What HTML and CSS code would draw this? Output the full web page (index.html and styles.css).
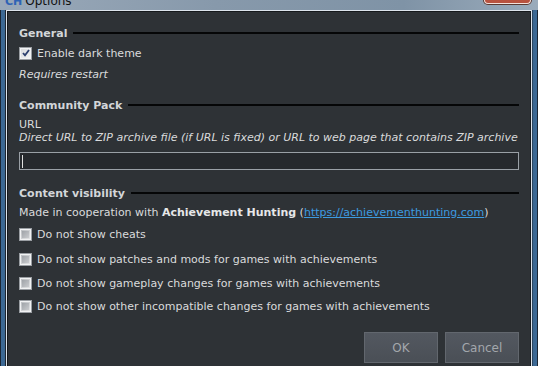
FILE: index.html
```html
<!DOCTYPE html>
<html>
<head>
<meta charset="utf-8">
<link rel="stylesheet" href="styles.css">
</head>
<body>
<div class="window">
  <div class="titlebar">
    <span class="app-icon">CH</span>
    <span class="title">Options</span>
    <span class="close"></span>
  </div>
  <div class="frame">
    <div class="client-edge">
      <div class="client">
        <div class="section-head"><span>General</span><span class="rule"></span></div>
        <label class="check-row first"><span class="box checked"><svg viewBox="0 0 8 8" width="8" height="8"><path d="M1 4 L3 6.3 L7 1" fill="none" stroke="#2b3f6e" stroke-width="1.8"/></svg></span>Enable dark theme</label>
        <div class="note">Requires restart</div>

        <div class="section-head gap-lg"><span>Community Pack</span><span class="rule"></span></div>
        <div class="label url">URL</div>
        <div class="note tight">Direct URL to ZIP archive file (if URL is fixed) or URL to web page that contains ZIP archive</div>
        <div class="input"><span class="caret"></span></div>

        <div class="section-head gap-lg2"><span>Content visibility</span><span class="rule"></span></div>
        <div class="label coop">Made in cooperation with <b>Achievement Hunting</b> (<a class="link">https://achievementhunting.com</a>)</div>
        <label class="check-row r1"><span class="box"></span>Do not show cheats</label>
        <label class="check-row r2"><span class="box"></span>Do not show patches and mods for games with achievements</label>
        <label class="check-row r3"><span class="box"></span>Do not show gameplay changes for games with achievements</label>
        <label class="check-row r4"><span class="box"></span>Do not show other incompatible changes for games with achievements</label>

        <div class="buttons">
          <span class="btn">OK</span>
          <span class="btn">Cancel</span>
        </div>
      </div>
    </div>
  </div>
</div>
</body>
</html>
```
FILE: styles.css
```css
html, body {
  margin: 0;
  padding: 0;
  width: 538px;
  height: 366px;
  overflow: hidden;
  background: #2b2f33;
}
.window {
  width: 538px;
  height: 366px;
  display: flex;
  flex-direction: column;
  font-family: "DejaVu Sans", Verdana, sans-serif;
  font-size: 11px;
  color: #dadbdc;
}
.titlebar {
  height: 10px;
  flex: none;
  display: flex;
  align-items: flex-end;
  overflow: hidden;
  background: linear-gradient(90deg, #9aa9b9 0%, #8799ab 40%, #7f93a6 75%, #9aabbb 100%);
}
.app-icon {
  margin-left: 5px;
  font-weight: bold;
  font-size: 11px;
  line-height: 11px;
  color: #2f63b5;
  margin-bottom: 3px;
}
.title {
  margin-left: 3px;
  font-size: 12px;
  line-height: 12px;
  color: #111;
  margin-bottom: 3px;
}
.close {
  margin-left: auto;
  margin-right: 7px;
  align-self: flex-start;
  width: 45px;
  height: 3px;
  background: #b8523f;
  border: 1px solid #f2e2dc;
  border-top: none;
  border-radius: 0 0 4px 4px;
  box-shadow: 0 0 0 1px #5b3a33;
}
.frame {
  flex: 1;
  display: flex;
  background: linear-gradient(90deg, #1b2633 0, #1b2633 1px, #3d6a97 1px, #3a6690 5px, #1c2530 5px, #1c2530 6px, transparent 6px, transparent 532px, #1c2530 532px, #3a6690 533px, #3d6a97 537px, #1b2633 537px);
}
.client-edge {
  flex: 1;
  margin: 0 6px;
  border: 1px solid #dde4ec;
  border-bottom: none;
  display: flex;
}
.client {
  flex: 1;
  border: 1px solid #16191c;
  border-bottom: none;
  background: #2e3236;
  padding: 13px 11px 0 11px;
  display: flex;
  flex-direction: column;
}
.section-head {
  display: flex;
  align-items: center;
  height: 16px;
  font-weight: bold;
  color: #d3d6d9;
  gap: 6px;
}
.rule {
  flex: 1;
  height: 2px;
  background: #050607;
}
.gap-lg { margin-top: 14px; }
.gap-lg2 { margin-top: 15px; }
.check-row {
  display: flex;
  align-items: center;
  height: 16px;
  gap: 5px;
  white-space: nowrap;
}
.check-row.first { margin-top: 4px; }
.check-row.r1 { margin-top: 5px; }
.check-row.r2 { margin-top: 9px; }
.check-row.r3 { margin-top: 8px; }
.check-row.r4 { margin-top: 7px; }
.box {
  width: 11px;
  height: 11px;
  flex: none;
  border: 1px solid #9a9ea3;
  background: linear-gradient(135deg, #b8bbbf, #e6e7e8);
  box-shadow: inset 0 0 0 1px #f1f2f3;
  display: flex;
  align-items: center;
  justify-content: center;
}
.box:not(.checked)::after {
  content: "";
  width: 7px;
  height: 7px;
  background: linear-gradient(135deg, #9fa3a8, #c9cbce);
}
.box.checked {
  background: linear-gradient(135deg, #d6d8db, #f3f4f5);
}
.note {
  font-style: italic;
  height: 16px;
  line-height: 16px;
  margin-top: 6px;
  white-space: nowrap;
}
.note.tight { margin-top: 0; height: 14px; line-height: 14px; }
.label {
  height: 16px;
  line-height: 16px;
  white-space: nowrap;
}
.label.url { margin-top: 5px; height: 13px; line-height: 13px; }
.coop { margin-top: 4px; }
.coop b { color: #e6e7e8; }
.link {
  color: #3d9be0;
  text-decoration: underline;
}
.input {
  margin-top: 7px;
  height: 16px;
  border: 1px solid #9aa0a6;
  background: #26292d;
  display: flex;
  align-items: center;
}
.caret {
  width: 1px;
  height: 13px;
  margin-left: 2px;
  background: #e0e0e0;
}
.buttons {
  margin-top: 18px;
  display: flex;
  justify-content: flex-end;
  gap: 7px;
}
.btn {
  width: 72px;
  height: 29px;
  border: 1px solid #62676e;
  background: linear-gradient(#535860, #4a4f56);
  color: #a3a7ac;
  font-size: 12px;
  display: flex;
  align-items: center;
  justify-content: center;
}
```
